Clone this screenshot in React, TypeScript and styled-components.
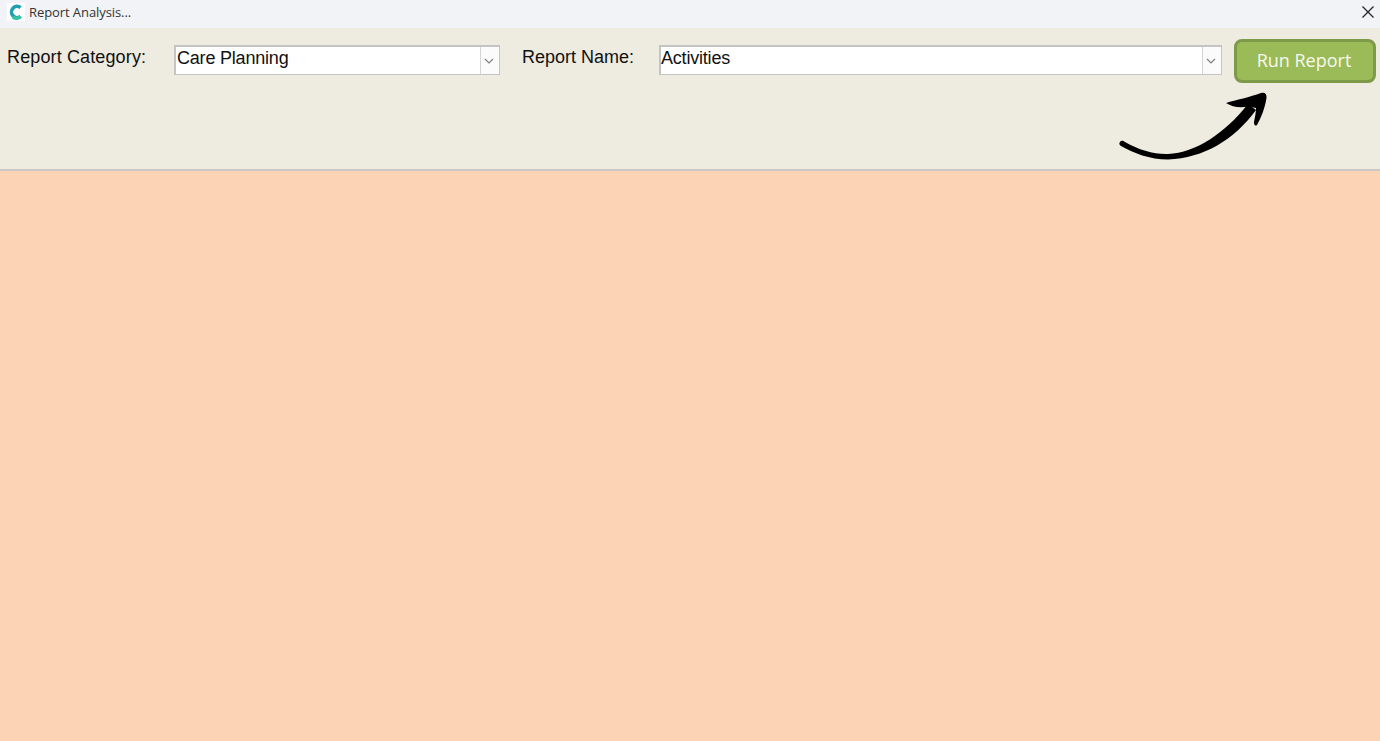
import React from "react";
import styled, { createGlobalStyle } from "styled-components";

const Global = createGlobalStyle`
  html, body { margin: 0; padding: 0; height: 100%; overflow: hidden; }
  #root { height: 100%; }
`;

const Page = styled.div`
  display: flex;
  flex-direction: column;
  width: 1380px;
  height: 741px;
  background: #fdd3b5;
  font-family: "Liberation Sans", Arial, sans-serif;
`;

const TitleBar = styled.div`
  display: flex;
  align-items: center;
  height: 28px;
  box-sizing: border-box;
  padding: 0 4px 5px 7px;
  background: #f1f3f6;
`;

const TitleText = styled.span`
  margin-left: 4px;
  font-family: "Open Sans", sans-serif;
  font-size: 13px;
  letter-spacing: -0.08px;
  color: #333;
`;

const CloseButton = styled.div`
  display: flex;
  margin-left: auto;
  color: #222;
`;

const Toolbar = styled.div`
  position: relative;
  display: flex;
  align-items: flex-start;
  height: 143px;
  box-sizing: border-box;
  padding: 11px 5px 0 7px;
  background: #eeebe0;
  border-bottom: 2px solid #c9c8c2;
`;

const Label = styled.label<{ $width: number; $spacing?: number }>`
  width: ${(p) => p.$width}px;
  flex: none;
  padding-top: 6px;
  font-size: 18px;
  line-height: 24px;
  letter-spacing: ${(p) => p.$spacing ?? 0}px;
  color: #111;
`;

const Select = styled.div<{ $width: number; $gap: number; $inset: number }>`
  display: flex;
  flex: none;
  width: ${(p) => p.$width}px;
  height: 30px;
  margin-top: 6px;
  margin-right: ${(p) => p.$gap}px;
  padding-left: ${(p) => p.$inset}px;
  box-sizing: border-box;
  background: #fff;
  border: 2px solid #c4c4c2;
  border-right-width: 1px;
  border-bottom-width: 1px;
`;

const SelectValue = styled.div`
  flex: 1;
  font-size: 18px;
  letter-spacing: -0.2px;
  line-height: 23px;
  color: #111;
`;

const SelectArrow = styled.div`
  display: flex;
  align-items: center;
  justify-content: center;
  width: 19px;
  padding-right: 3px;
  box-sizing: border-box;
  background: #fbfbfb;
  border-left: 1px solid #d4d4d4;
  color: #808080;
`;

const RunButton = styled.button`
  flex: none;
  width: 142px;
  height: 44px;
  margin-left: 12px;
  padding: 0 2px 2px 0;
  background: #9bbb59;
  border: 3px solid #7d9a49;
  border-radius: 8px;
  font-family: "Open Sans", sans-serif;
  font-size: 18px;
  color: #f7f9ee;
`;

const ArrowMark = styled.svg`
  position: absolute;
  left: 1110px;
  top: 60px;
`;

const Chevron = () => (
  <svg width="10" height="6" viewBox="0 0 10 6" fill="none" stroke="currentColor" strokeWidth="1.2">
    <path d="M1 1l4 4 4-4" />
  </svg>
);

export default function App() {
  return (
    <Page>
      <Global />
      <TitleBar>
        <svg width="18" height="18" viewBox="0 0 18 18">
          <rect width="18" height="18" fill="#fff" />
          <path d="M13.6 4.6A5.6 5.6 0 1 0 13.6 13.4" fill="none" stroke="#1f9fb0" strokeWidth="3.6" />
          <path d="M13.6 13.4A5.6 5.6 0 0 1 6 14" fill="none" stroke="#35c3a4" strokeWidth="3.6" />
        </svg>
        <TitleText>Report Analysis...</TitleText>
        <CloseButton>
          <svg width="16" height="16" viewBox="0 0 16 16" fill="none" stroke="currentColor" strokeWidth="1.2">
            <path d="M2.5 2.5l11 11M13.5 2.5l-11 11" />
          </svg>
        </CloseButton>
      </TitleBar>
      <Toolbar>
        <Label $width={167} $spacing={0.13}>Report Category:</Label>
        <Select $width={326} $gap={22} $inset={1}>
          <SelectValue>Care Planning</SelectValue>
          <SelectArrow><Chevron /></SelectArrow>
        </Select>
        <Label $width={137}>Report Name:</Label>
        <Select $width={563} $gap={0} $inset={0}>
          <SelectValue>Activities</SelectValue>
          <SelectArrow><Chevron /></SelectArrow>
        </Select>
        <RunButton>Run Report</RunButton>
        <ArrowMark width="170" height="90" viewBox="0 0 170 90" fill="#000">
          <path d="M10 54C12 52 13 53 15 54C29 62 44 66.500 58 66C86 64.500 114 46 138 16L146 22C124 52 94 70 58 71.500C40 71.500 23 65 11 58C9 57 9 55 10 54Z" />
          <path d="M116 15C126 12 140 9 151 5C155 4 157 6 156.500 10C155 20 151 30 147 37C145 38.500 144 37 144 34C145 29 146 24 146 20L138 18.500C130 20 122 19 116 15Z" />
        </ArrowMark>
      </Toolbar>
    </Page>
  );
}
